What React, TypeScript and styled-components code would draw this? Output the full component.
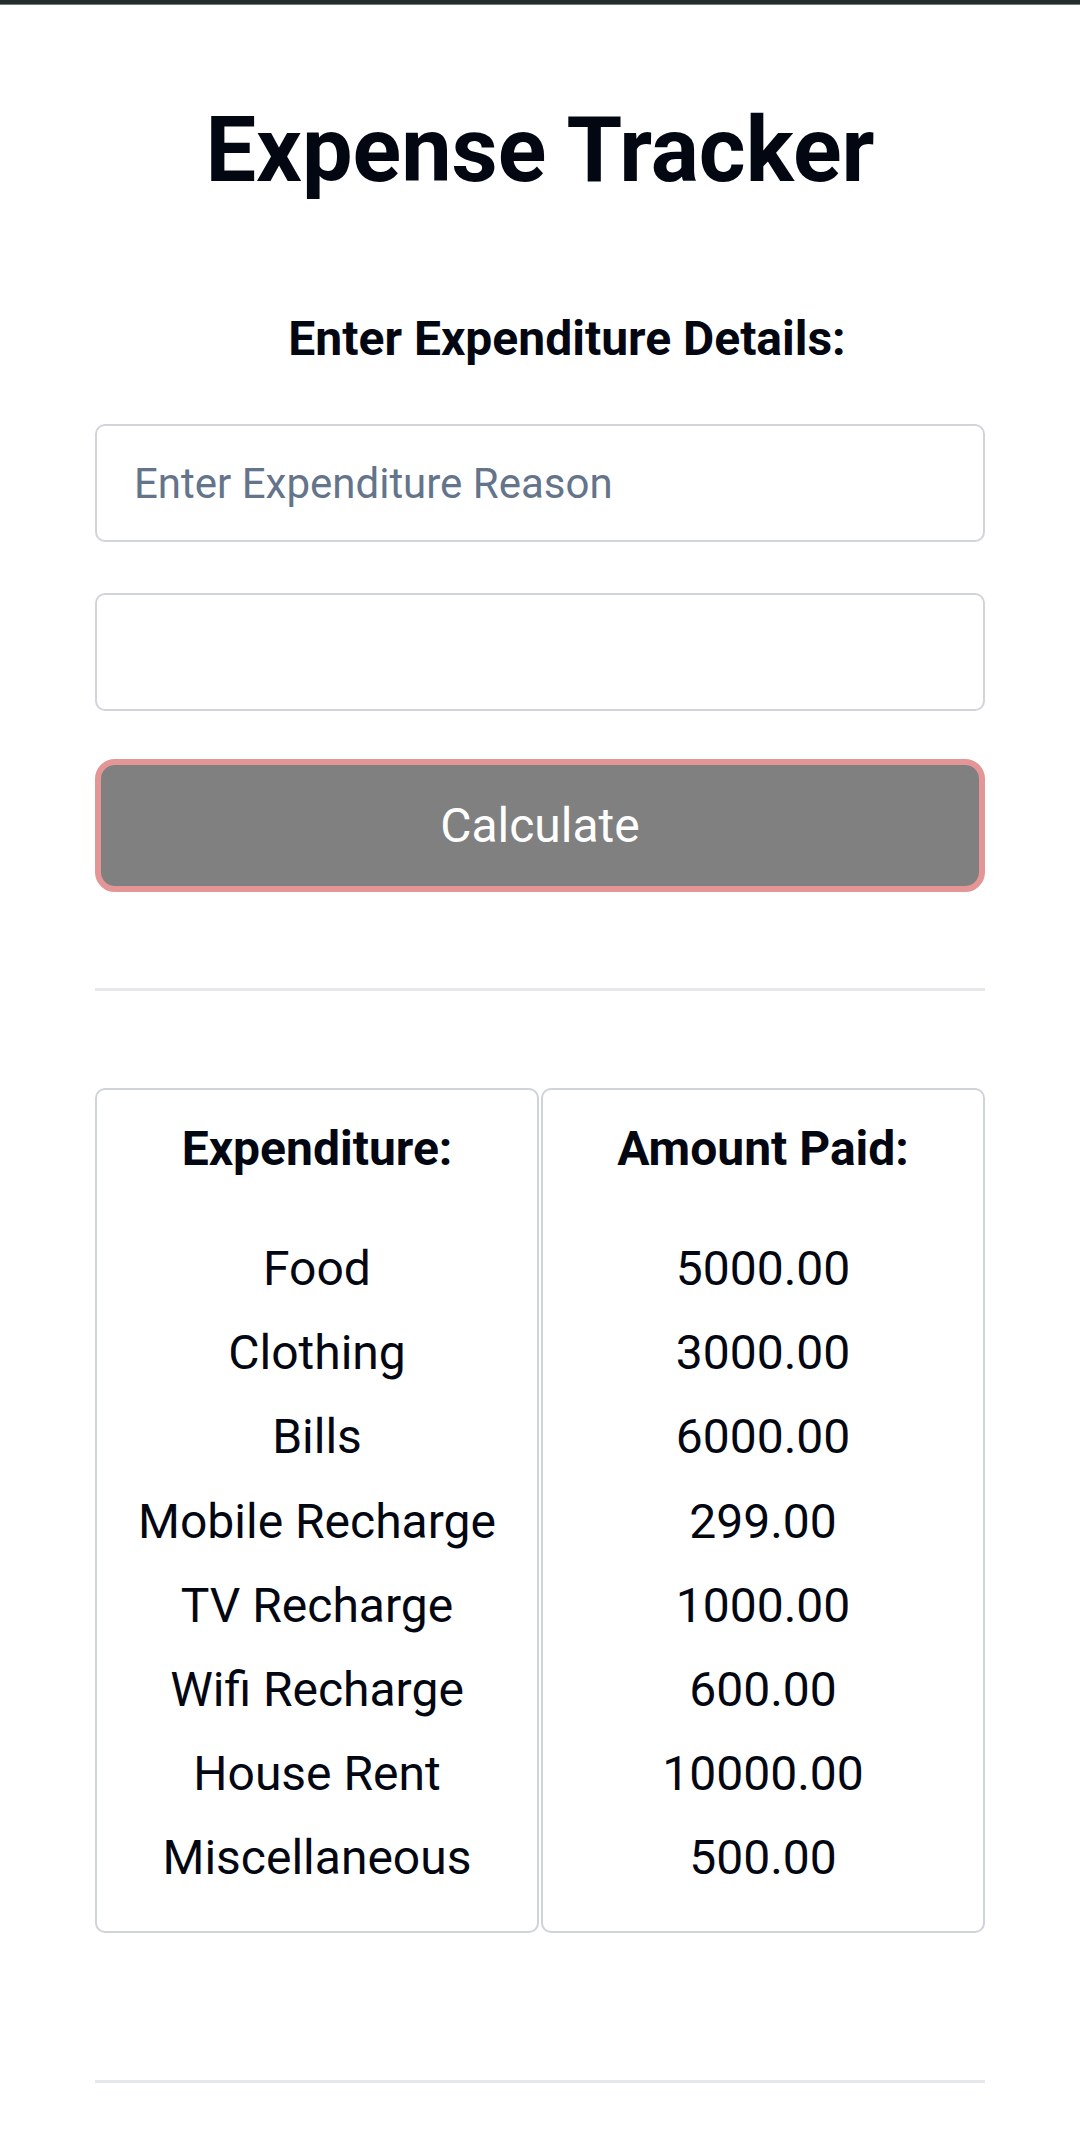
import React from "react";
import styled, { createGlobalStyle } from "styled-components";

const GlobalStyle = createGlobalStyle`
  html, body {
    margin: 0;
    padding: 0;
    background: #ffffff;
  }
  body {
    font-family: Roboto, "Noto Sans", "Liberation Sans", sans-serif;
    color: #030712;
  }
  * { box-sizing: border-box; }
`;

const StatusStrip = styled.div`
  height: 5px;
  background: #232b2b;
  border-bottom: 1px solid #737b7d;
`;

const Main = styled.main`
  width: 890px;
  margin: 0 auto;
  display: flex;
  flex-direction: column;
`;

const Title = styled.h1`
  margin: 90px 0 0;
  font-size: 90px;
  line-height: 112px;
  font-weight: 700;
  text-align: center;
  color: #030712;
`;

const Subtitle = styled.h2`
  margin: 104px 0 0;
  padding-left: 54px;
  font-size: 48px;
  line-height: 56px;
  font-weight: 700;
  text-align: center;
  color: #030712;
`;

const Field = styled.input<{ $gap: number }>`
  display: block;
  width: 100%;
  height: 118px;
  margin-top: ${(p) => p.$gap}px;
  padding: 0 37px;
  border: 2px solid #d1d5db;
  border-radius: 10px;
  background: #ffffff;
  font-family: Roboto, "Noto Sans", sans-serif;
  font-size: 42px;
  color: #030712;
  outline: none;
  &::placeholder {
    color: #64748b;
  }
`;

const CalcButton = styled.button`
  display: block;
  width: 100%;
  height: 133px;
  margin-top: 48px;
  border: 6px solid #e49595;
  border-radius: 20px;
  background: #808080;
  color: #ffffff;
  font-family: Roboto, "Noto Sans", sans-serif;
  font-size: 48px;
  font-weight: 400;
  cursor: pointer;
`;

const Rule = styled.hr<{ $top: number }>`
  margin: ${(p) => p.$top}px 0 0;
  height: 3px;
  border: none;
  background: #e5e7eb;
`;

const Columns = styled.section`
  margin-top: 97px;
  display: grid;
  grid-template-columns: 1fr 1fr;
  gap: 2px;
`;

const Card = styled.div`
  height: 845px;
  border: 2px solid #cfd3da;
  border-radius: 10px;
  padding: 17px 0 31px;
  display: flex;
  flex-direction: column;
  align-items: center;
`;

const CardHeader = styled.h3`
  margin: 0 0 36px;
  font-size: 48px;
  line-height: 84px;
  font-weight: 700;
  color: #030712;
`;

const Item = styled.div`
  font-size: 48px;
  line-height: 84.2px;
  font-weight: 400;
  color: #030712;
  text-align: center;
  white-space: nowrap;
`;

const expenses = [
  { name: "Food", amount: 5000 },
  { name: "Clothing", amount: 3000 },
  { name: "Bills", amount: 6000 },
  { name: "Mobile Recharge", amount: 299 },
  { name: "TV Recharge", amount: 1000 },
  { name: "Wifi Recharge", amount: 600 },
  { name: "House Rent", amount: 10000 },
  { name: "Miscellaneous", amount: 500 },
];

export default function App() {
  return (
    <>
      <GlobalStyle />
      <StatusStrip />
      <Main>
        <Title>Expense Tracker</Title>
        <Subtitle>Enter Expenditure Details:</Subtitle>
        <Field $gap={57} type="text" placeholder="Enter Expenditure Reason" />
        <Field $gap={51} type="text" />
        <CalcButton type="button">Calculate</CalcButton>
        <Rule $top={96} />
        <Columns>
          <Card>
            <CardHeader>Expenditure:</CardHeader>
            {expenses.map((e) => (
              <Item key={e.name}>{e.name}</Item>
            ))}
          </Card>
          <Card>
            <CardHeader>Amount Paid:</CardHeader>
            {expenses.map((e) => (
              <Item key={e.name}>{e.amount.toFixed(2)}</Item>
            ))}
          </Card>
        </Columns>
        <Rule $top={147} />
      </Main>
    </>
  );
}
